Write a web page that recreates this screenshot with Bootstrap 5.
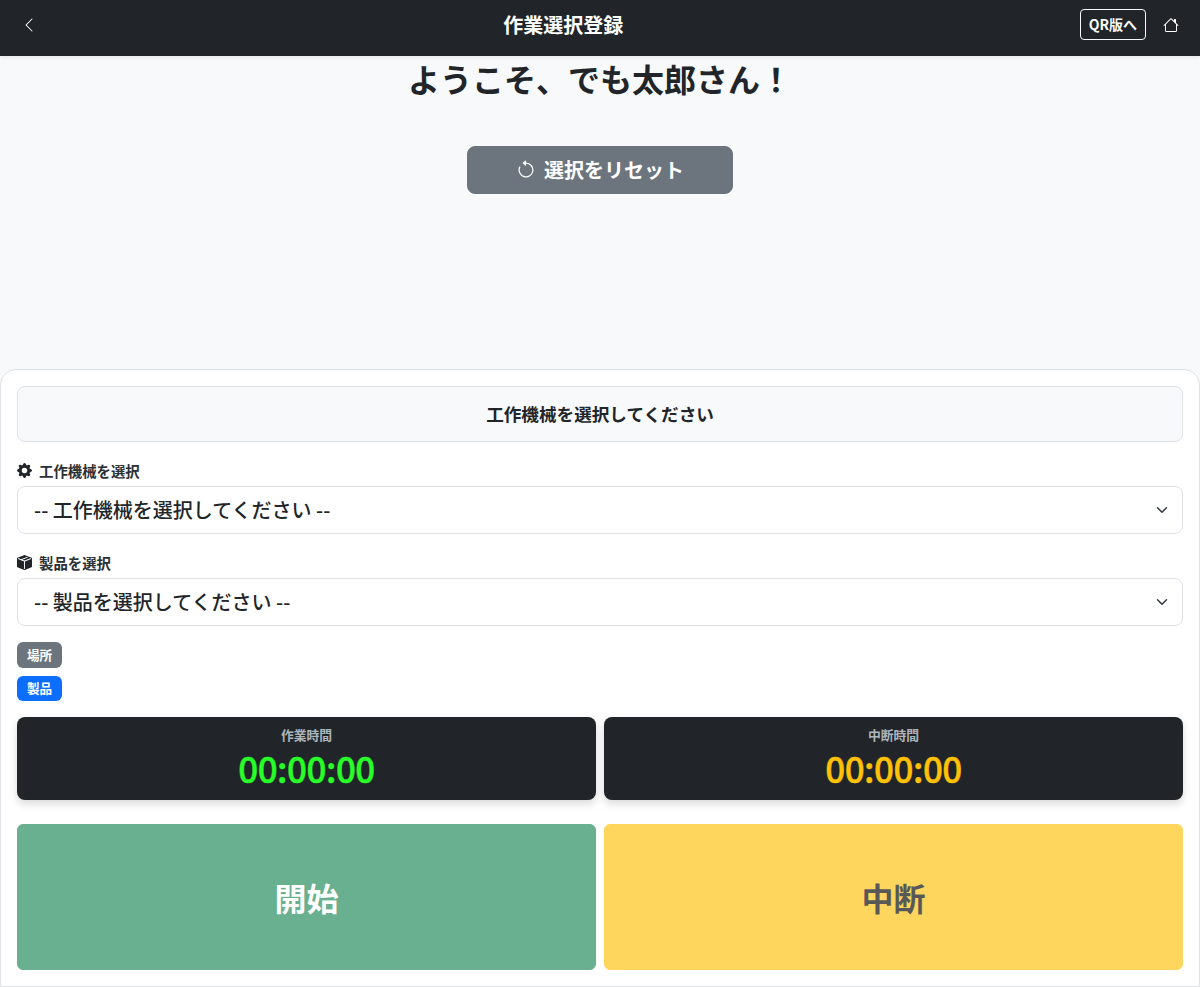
<!DOCTYPE html>
<html lang="ja">
<head>
    <meta charset="UTF-8">
    <meta name="viewport" content="width=device-width, initial-scale=1.0">
    <title>作業選択登録</title>
    <link rel="stylesheet" href="https://cdn.jsdelivr.net/npm/bootstrap@5.3.0/dist/css/bootstrap.min.css">
    <style>
        body {
            font-family: "Noto Sans CJK JP", "Noto Sans", sans-serif;
            background-color: #f8f9fa;
            height: 100vh;
            display: flex;
            flex-direction: column;
        }
        .top-bar {
            height: 56px;
            flex-shrink: 0;
            padding: 0 5px 6px 5px;
        }
        .top-title {
            font-size: 20px;
            font-weight: 700;
            margin-right: 6px;
        }
        .qr-btn {
            font-size: 14px;
            font-weight: 700;
            padding: 4px 8px;
            border-radius: 4px;
            margin: 0 1px 2px 0;
        }
        .welcome-text {
            font-size: 32px;
            font-weight: 700;
            line-height: 44px;
            margin: 0;
        }
        .reset-btn {
            width: 266px;
            height: 48px;
            font-size: 20px;
            font-weight: 700;
            margin-top: 46px;
            border-radius: 8px;
        }
        .work-panel {
            background: #fff;
            border: 1px solid #dee2e6;
            border-radius: 16px 16px 0 0;
            padding: 16px;
            margin-top: auto;
        }
        .status-box {
            height: 56px;
            background: #f8f9fa;
            border: 1px solid #dee2e6;
            border-radius: 8px;
            font-size: 17.6px;
            font-weight: 700;
            margin-bottom: 18px;
        }
        .pick-group {
            margin-bottom: 18px;
        }
        .pick-label {
            font-size: 14.4px;
            font-weight: 600;
            color: #2b3035;
            margin-bottom: 5px;
            line-height: 21px;
            gap: 7px;
        }
        .pick-label svg {
            color: #212529;
        }
        .pick-select {
            font-weight: 500;
        }
        .info-tag {
            font-size: 12.6px;
            width: 45px;
            padding: 6.4px 0;
            border-radius: 6px;
        }
        .timer-box {
            height: 83px;
            padding-top: 9px;
            background: #212529;
            border-radius: 8px;
            box-shadow: 0 4px 8px rgba(0, 0, 0, .15);
        }
        .timer-label {
            font-size: 12.8px;
            font-weight: 600;
            color: #adb5bd;
            line-height: 18.5px;
        }
        .timer-value {
            font-size: 35px;
            font-weight: 500;
            line-height: 45px;
            letter-spacing: -.5px;
            -webkit-text-stroke: .4px currentColor;
        }
        .timer-green { color: #28ff28; }
        .timer-yellow { color: #ffc107; }
        .big-btn {
            height: 146px;
            width: 100%;
            font-size: 32px;
            font-weight: 700;
        }
    </style>
</head>
<body>
    <nav class="top-bar bg-dark d-flex align-items-center justify-content-between shadow-sm">
        <a href="#" class="btn text-white border-0 px-3 d-flex"><svg width="16" height="16" viewBox="0 0 16 16" fill="currentColor"><path fill-rule="evenodd" d="M11.354 1.646a.5.5 0 0 1 0 .708L5.707 8l5.647 5.646a.5.5 0 0 1-.708.708l-6-6a.5.5 0 0 1 0-.708l6-6a.5.5 0 0 1 .708 0z"/></svg></a>
        <span class="top-title text-white">作業選択登録</span>
        <div class="d-flex align-items-center">
            <a href="#" class="btn btn-outline-light qr-btn">QR版へ</a>
            <a href="#" class="btn text-white border-0 px-3 d-flex"><svg width="16" height="16" viewBox="0 0 16 16" fill="currentColor"><path d="M8.707 1.5a1 1 0 0 0-1.414 0L.646 8.146a.5.5 0 0 0 .708.708L2 8.207V13.5A1.5 1.5 0 0 0 3.5 15h9a1.5 1.5 0 0 0 1.5-1.5V8.207l.646.647a.5.5 0 0 0 .708-.708L13 5.793V2.5a.5.5 0 0 0-.5-.5h-1a.5.5 0 0 0-.5.5v1.293L8.707 1.5ZM13 7.207V13.5a.5.5 0 0 1-.5.5h-9a.5.5 0 0 1-.5-.5V7.207l5-5 5 5Z"/></svg></a>
        </div>
    </nav>

    <div class="text-center">
        <h2 class="welcome-text">ようこそ、でも太郎さん！</h2>
        <button type="button" class="btn btn-secondary reset-btn d-inline-flex align-items-center justify-content-center gap-2">
            <svg width="20" height="20" viewBox="0 0 16 16" fill="currentColor"><path fill-rule="evenodd" d="M8 3a5 5 0 1 1-4.546 2.914.5.5 0 0 0-.908-.417A6 6 0 1 0 8 2v1z"/><path d="M8 4.466V.534a.25.25 0 0 0-.41-.192L5.23 2.308a.25.25 0 0 0 0 .384l2.36 1.966A.25.25 0 0 0 8 4.466z"/></svg>
            選択をリセット
        </button>
    </div>

    <div class="work-panel">
        <div class="status-box d-flex align-items-center justify-content-center">工作機械を選択してください</div>

        <div class="pick-group">
            <label class="pick-label d-flex align-items-center" for="machine">
                <svg width="15" height="15" viewBox="0 0 16 16" fill="currentColor"><path d="M9.405 1.05c-.413-1.4-2.397-1.4-2.81 0l-.1.34a1.464 1.464 0 0 1-2.105.872l-.31-.17c-1.283-.698-2.686.705-1.987 1.987l.169.311c.446.82.023 1.841-.872 2.105l-.34.1c-1.4.413-1.4 2.397 0 2.81l.34.1a1.464 1.464 0 0 1 .872 2.105l-.17.31c-.698 1.283.705 2.686 1.987 1.987l.311-.169a1.464 1.464 0 0 1 2.105.872l.1.34c.413 1.4 2.397 1.4 2.81 0l.1-.34a1.464 1.464 0 0 1 2.105-.872l.31.17c1.283.698 2.686-.705 1.987-1.987l-.169-.311a1.464 1.464 0 0 1 .872-2.105l.34-.1c1.4-.413 1.4-2.397 0-2.81l-.34-.1a1.464 1.464 0 0 1-.872-2.105l.17-.31c.698-1.283-.705-2.686-1.987-1.987l-.311.169a1.464 1.464 0 0 1-2.105-.872l-.1-.34zM8 10.93a2.929 2.929 0 1 1 0-5.86 2.929 2.929 0 0 1 0 5.858z"/></svg>
                <span>工作機械を選択</span>
            </label>
            <select id="machine" class="form-select form-select-lg pick-select">
                <option>-- 工作機械を選択してください --</option>
            </select>
        </div>

        <div class="mb-3">
            <label class="pick-label d-flex align-items-center" for="product">
                <svg width="15" height="15" viewBox="0 0 16 16" fill="currentColor"><path fill-rule="evenodd" d="M15.528 2.973a.75.75 0 0 1 .472.696v8.662a.75.75 0 0 1-.472.696l-7.25 2.9a.75.75 0 0 1-.557 0l-7.25-2.9A.75.75 0 0 1 0 12.331V3.669a.75.75 0 0 1 .471-.696L7.443.184l.01-.003.268-.108a.75.75 0 0 1 .558 0l.269.108.01.003 6.97 2.789ZM10.404 2 4.25 4.461 1.846 3.5 1 3.839v.4l6.5 2.6v7.922l.5.2.5-.2V6.84l6.5-2.6v-.4l-.846-.339L8 5.961 5.596 5l6.154-2.461L10.404 2Z"/></svg>
                <span>製品を選択</span>
            </label>
            <select id="product" class="form-select form-select-lg pick-select">
                <option>-- 製品を選択してください --</option>
            </select>
        </div>

        <div class="d-flex flex-column align-items-start gap-2 mb-3">
            <span class="badge text-bg-secondary info-tag">場所</span>
            <span class="badge text-bg-primary info-tag">製品</span>
        </div>

        <div class="row g-2 mb-4">
            <div class="col-6">
                <div class="timer-box d-flex flex-column align-items-center">
                    <div class="timer-label">作業時間</div>
                    <div class="timer-value timer-green">00:00:00</div>
                </div>
            </div>
            <div class="col-6">
                <div class="timer-box d-flex flex-column align-items-center">
                    <div class="timer-label">中断時間</div>
                    <div class="timer-value timer-yellow">00:00:00</div>
                </div>
            </div>
        </div>

        <div class="row g-2">
            <div class="col-6"><button type="button" class="btn btn-success big-btn" disabled>開始</button></div>
            <div class="col-6"><button type="button" class="btn btn-warning big-btn" disabled>中断</button></div>
        </div>
    </div>

    <script src="https://cdn.jsdelivr.net/npm/bootstrap@5.3.0/dist/js/bootstrap.bundle.min.js"></script>
</body>
</html>
